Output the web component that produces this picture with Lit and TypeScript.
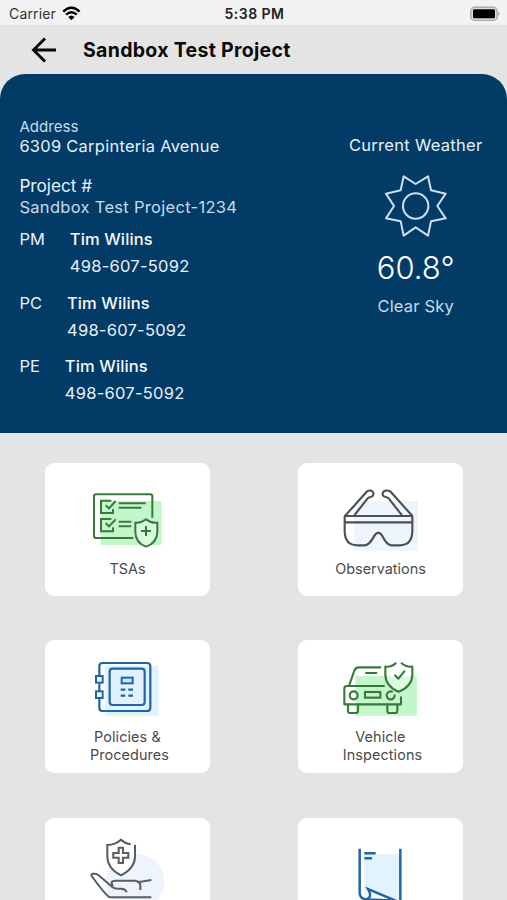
import { LitElement, html, css } from "lit";
import { customElement, property } from "lit/decorators.js";

const tsaIcon = html`<svg class="art" width="165" height="97" viewBox="15 24 495 291" fill="none" stroke="#37793b" stroke-width="6">
  <rect x="182" y="138" width="183" height="132" rx="6" fill="#c3f7cb" stroke="none" />
  <path d="M337 188V124q0-6-6-6H168q-6 0-6 6V242q0 7 7 7H280" />
  <path d="M214 137H183V174H219V162M197 151L207 160L227 138M214 192H183V229H219V217M197 205L207 214L227 193" />
  <path d="M236 145H317M236 158H304M236 200H274M236 214H274" />
  <path d="M318 193q-15 12-32 10v27q0 33 32 45q34-12 34-45v-27q-18 2-34-10z" fill="#d7fbdc" />
  <path d="M318 213V243M303 228H333" />
</svg>`;

const glassesIcon = html`<svg class="art" width="165" height="97" viewBox="15 24 495 291" fill="none" stroke="#4b5156" stroke-width="6.4" stroke-linejoin="round">
  <rect x="184" y="138" width="191" height="149" fill="#eff5fc" stroke="none" />
  <path d="M155 184L217 115C226 101 244 106 241 119C239 128 229 124 224 130L184 181M359 184L297 115C288 101 266 106 269 119C271 128 281 124 287 130L327 181" />
  <path d="M155 183H358M157 202H356M155 183V229Q156 271 193 271H216C240 267 240 234 256 233C272 234 270 266 294 271H320Q357 271 358 229V183" />
</svg>`;

const safeIcon = html`<svg class="art" width="165" height="88" viewBox="15 15 495 264" fill="none" stroke="#22659f" stroke-width="6.6">
  <rect x="194" y="93" width="162" height="149" rx="5" fill="#e0f2ff" stroke="none" />
  <path d="M178 120V94q0-10 10-10H321q10 0 10 10V218q0 10-10 10H188q-10 0-10-10V191M178 145V168" />
  <rect x="209" y="101" width="105" height="109" rx="9" />
  <rect x="168" y="123" width="20" height="20" fill="#fff" stroke-width="6" />
  <rect x="168" y="169" width="20" height="20" fill="#fff" stroke-width="6" />
  <rect x="245" y="128" width="33" height="17" fill="#c9e8ff" stroke-width="6" />
  <path d="M242 164H256M265 164H279M242 182H256M265 182H279" stroke-width="7" />
</svg>`;

const carIcon = html`<svg class="art" width="165" height="88" viewBox="15 15 495 264" fill="none" stroke="#37783b" stroke-width="6.3" stroke-linecap="round" stroke-linejoin="round">
  <path d="M187 123H366q6 0 6 7V242H187z" fill="#c3f7cb" stroke="none" />
  <path d="M262 97H198q-11 0-14 10L168 153M273 153H161q-7 0-7 8V208H324V187M219 114H250" />
  <path d="M165 209V228q0 6 6 6H189q6 0 6-6V209M283 209V228q0 6 6 6H307q6 0 6-6V209" />
  <circle cx="182" cy="181" r="12" />
  <path d="M297 170A12 12 0 1 0 305 181" />
  <rect x="216" y="171" width="46" height="17" stroke-linejoin="miter" />
  <path d="M308 84Q296 97 277 95V119Q278 154 317 170Q357 154 358 119V95Q339 97 326 84z" fill="#fff" stroke="none" />
  <path d="M280 124H356Q351 155 317 167Q284 154 280 124Z" fill="#d9fbdf" stroke="none" />
  <path d="M308 85Q296 97 277 95V119Q278 154 317 170Q357 154 358 119V95Q339 97 326 85M306 121L316 131L334 109" />
</svg>`;

const careIcon = html`<svg class="art" width="165" height="111" viewBox="15 22 495 333" fill="none" stroke="#5a5e62" stroke-width="6.2">
  <ellipse cx="285" cy="213" rx="88" ry="84" fill="#eef4fb" stroke="none" />
  <path d="M272 101Q254 98 243 87Q226 102 202 103V138Q203 174 243 194Q284 173 285 138V102" fill="#fff" />
  <path d="M236 111H249V127H265V141H249V157H236V141H220V127H236z" />
  <path d="M334 260H209Q198 255 155 196C150 188 166 187 175 193L217 229Q225 236 242 234Q257 234 260 245M219 226Q208 210 227 210H285Q301 213 301 225V238M291 213H303L334 208" />
</svg>`;

const pageIcon = html`<svg class="art" width="165" height="111" viewBox="15 22 495 333" fill="none" stroke="#22659f" stroke-width="7.5">
  <path d="M214 130H320V280L226 234 214 260z" fill="#e2f3ff" stroke="none" />
  <path d="M200 114V247Q201 264 219 266Q240 261 225 235L322 276V114M214 266L310 270" />
  <path d="M214 128H248M214 143H237" />
</svg>`;

@customElement("status-bar")
class StatusBar extends LitElement {
  static styles = css`
    :host { display: grid; grid-template-columns: 1fr auto 1fr; align-items: center; height: 25px; padding: 0 7px 0 9px; background: #f2f2f2; color: #222; font-size: 14px; line-height: 28px; }
    .carrier { display: flex; align-items: center; gap: 6px; height: 28px; color: #333; letter-spacing: 0.15px; }
    .time { font-weight: 600; height: 28px; letter-spacing: 0.45px; }
    .battery { justify-self: end; }
    svg { display: block; }
  `;
  render() {
    return html`
      <div class="carrier"><span>Carrier</span>
        <svg width="19" height="16" viewBox="0 0 19 16" fill="none" stroke="#000" stroke-width="2.5">
          <path d="M1.2 5.6Q9.4-2.2 17.6 5.6M4.1 8.7Q9.4 3.7 14.7 8.7" /><path d="M6.2 11Q9.4 8 12.6 11L9.4 14.2z" fill="#000" stroke="none" />
        </svg>
      </div>
      <div class="time">5:38 PM</div>
      <svg class="battery" width="30" height="16" viewBox="0 0 30 16"><rect x=".8" y="1.2" width="26.4" height="13.2" rx="4" fill="#ddd" stroke="#aaa" stroke-width="1.4" /><rect x="3" y="3.3" width="22" height="9" rx="1.3" /><path d="M28.3 5.7q3 2.1 0 4.2z" fill="#aaa" /></svg>`;
  }
}

@customElement("contact-row")
class ContactRow extends LitElement {
  @property() role = "";
  @property() name = "";
  @property() phone = "";
  static styles = css`
    :host { display: flex; gap: 25px; height: 63.3px; line-height: 27px; font-size: 16.5px; color: #e6f1fb; }
    .name { font-weight: 500; color: #f4faff; letter-spacing: 0.1px; }
    .phone { letter-spacing: 0.25px; }
  `;
  render() {
    return html`<div>${this.role}</div><div><div class="name">${this.name}</div><div class="phone">${this.phone}</div></div>`;
  }
}

@customElement("menu-card")
class MenuCard extends LitElement {
  @property({ attribute: false }) icon: unknown;
  @property({ attribute: false }) lines: string[] = [];
  static styles = css`
    :host { display: flex; flex-direction: column; align-items: center; height: 133px; border-radius: 9px; background: #fff; color: #4a4a4a; font-size: 14.4px; line-height: 17.6px; text-align: center; white-space: pre; }
    .art { display: block; flex: none; }
    .paired { padding-left: 4px; letter-spacing: 0.1px; }
  `;
  render() {
    const kind = this.lines.length > 1 ? "paired" : "single";
    return html`${this.icon}<div class=${kind}>${this.lines.map((l) => html`<div>${l}</div>`)}</div>`;
  }
}

@customElement("app-root")
class AppRoot extends LitElement {
  static styles = css`
    :host { display: block; height: 900px; overflow: hidden; background: #e4e4e4; font-family: Inter, "Liberation Sans", sans-serif; }
    header { display: flex; align-items: center; height: 49px; padding-left: 31px; gap: 26px; }
    header svg { display: block; }
    h1 { margin: 0; font-size: 19.5px; line-height: 24px; font-weight: 650; letter-spacing: 0.3px; color: #0b0b0b; }
    .panel { display: flex; justify-content: space-between; box-sizing: border-box; height: 359px; padding: 43px 24.5px 0 19.4px; border-radius: 25px 25px 0 0; background: #033b67; color: #e6f1fb; white-space: nowrap; }
    .small { font-size: 15.1px; line-height: 20px; color: #c5dbed; }
    .address { font-size: 16.4px; line-height: 19px; letter-spacing: 0.3px; }
    .project { margin-top: 19px; font-size: 17.2px; line-height: 22px; }
    .number { font-size: 16.5px; line-height: 20px; margin-bottom: 9.4px; letter-spacing: 0.3px; color: #c5dbed; }
    .weather { display: flex; flex-direction: column; align-items: center; padding-top: 18px; font-size: 16.5px; line-height: 20px; letter-spacing: 0.3px; }
    .sun { display: block; margin: 20px 0 11px; }
    .temp { font-size: 31px; line-height: 40px; font-weight: 350; letter-spacing: 0; color: #fff; }
    .sky { margin-top: 8px; letter-spacing: 0.2px; color: #c5dbed; }
    .menu { display: grid; grid-template-columns: 165px 165px; column-gap: 88px; row-gap: 44.4px; padding: 30px 0 0 45px; }
  `;
  render() {
    const people = ["PM", "PC", "PE"];
    const cards: [unknown, string[]][] = [
      [tsaIcon, ["TSAs"]],
      [glassesIcon, ["Observations"]],
      [safeIcon, ["Policies & ", "Procedures"]],
      [carIcon, ["Vehicle ", "Inspections"]],
      [careIcon, []],
      [pageIcon, []],
    ];
    return html`
      <status-bar></status-bar>
      <header>
        <svg width="26" height="26" viewBox="0 0 26 26" fill="none" stroke="#080808" stroke-width="2.9"><path d="M25 13H3M14 1.5L2.5 13L14 24.5" /></svg>
        <h1>Sandbox Test Project</h1>
      </header>
      <section class="panel">
        <div>
          <div class="small">Address</div>
          <div class="address">6309 Carpinteria Avenue</div>
          <div class="project">Project #</div>
          <div class="number">Sandbox Test Project-1234</div>
          ${people.map((p) => html`<contact-row .role=${p} .name=${"Tim Wilins"} .phone=${"498-607-5092"}></contact-row>`)}
        </div>
        <div class="weather">
          <div>Current Weather</div>
          <svg class="sun" width="62" height="62" viewBox="167 166 186 186" fill="none" stroke="#cfdfed" stroke-width="6" stroke-linejoin="round">
            <path d="M223 170L259 193L296 170L305 212L349 222L324 259L349 296L305 305L296 348L259 323L223 348L214 305L170 296L194 259L170 222L214 212z" /><circle cx="259" cy="259" r="38" />
          </svg>
          <div class="temp">60.8°</div>
          <div class="sky">Clear Sky</div>
        </div>
      </section>
      <main class="menu">${cards.map(([icon, lines]) => html`<menu-card .icon=${icon} .lines=${lines}></menu-card>`)}</main>`;
  }
}
